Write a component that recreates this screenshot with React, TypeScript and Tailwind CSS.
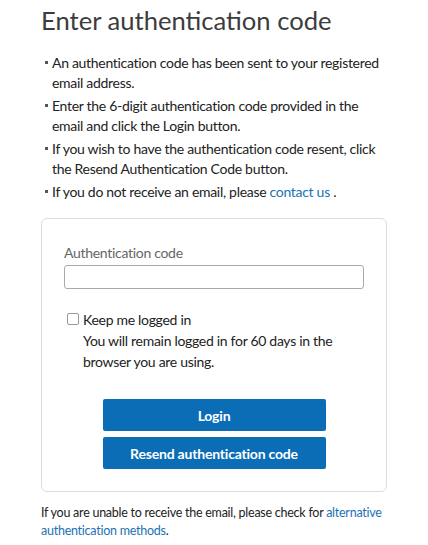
export default function App() {
  const items = [
    "An authentication code has been sent to your registered email address.",
    "Enter the 6-digit authentication code provided in the email and click the Login button.",
    "If you wish to have the authentication code resent, click the Resend Authentication Code button.",
  ];

  return (
    <div className="min-h-[545px] w-[428px] bg-white px-[41px] pt-[3px] font-['Lato',sans-serif] text-[#222]">
      <h1 className="text-[25.6px] leading-[34px] text-[#3c3c3c]">Enter authentication code</h1>

      <ul className="mt-[16px] flex flex-col gap-[3px] pl-[4px] text-[14px] leading-[20px] tracking-[-0.3px]">
        {items.map((text) => (
          <li key={text} className="flex gap-[4px]">
            <span className="mt-[8px] h-[3px] w-[3px] shrink-0 bg-[#555]" />
            <span>{text}</span>
          </li>
        ))}
        <li className="flex gap-[4px]">
          <span className="mt-[8px] h-[3px] w-[3px] shrink-0 bg-[#555]" />
          <span>
            If you do not receive an email, please{" "}
            <a href="#" className="text-[#1a73b5]">
              contact us
            </a>{" "}
            .
          </span>
        </li>
      </ul>

      <div className="mt-[16px] rounded-[6px] border border-[#ddd] px-[22px] pb-[22px] pt-[24px]">
        <label className="block text-[14px] leading-[20px] tracking-[-0.3px] text-[#666]">
          Authentication code
        </label>
        <input
          type="text"
          className="mt-[2px] block h-[24px] w-full rounded-[3px] border border-[#aaa] px-2 text-[14px]"
        />

        <div className="mt-[20px] flex items-start gap-[4px] pl-[3px]">
          <span className="mt-[4px] h-[12px] w-[12px] shrink-0 rounded-[2px] border border-[#999] bg-white" />
          <div className="text-[14px] leading-[21px] tracking-[-0.3px]">
            <div>Keep me logged in</div>
            <div>You will remain logged in for 60 days in the browser you are using.</div>
          </div>
        </div>

        <div className="mt-[27px] flex flex-col items-center gap-[6px]">
          <button className="h-[32px] w-[223px] rounded-[2px] bg-[#0b6db5] text-[14px] font-bold tracking-[-0.2px] text-white">
            Login
          </button>
          <button className="h-[32px] w-[223px] rounded-[2px] bg-[#0b6db5] text-[14px] font-bold tracking-[-0.2px] text-white">
            Resend authentication code
          </button>
        </div>
      </div>

      <p className="mt-[12px] text-[12.5px] leading-[18px] tracking-[-0.25px] text-[#222]">
        If you are unable to receive the email, please check for{" "}
        <a href="#" className="text-[#1a73b5]">
          alternative authentication methods
        </a>
        .
      </p>
    </div>
  );
}
